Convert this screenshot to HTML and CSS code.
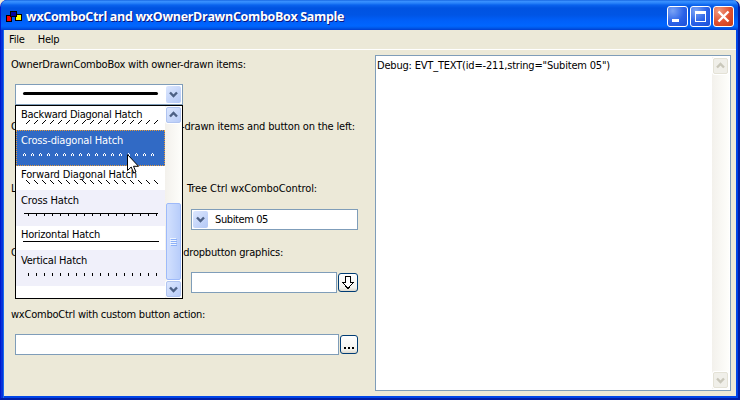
FILE: index.html
```html
<!DOCTYPE html>
<html lang="en"><head><meta charset="utf-8"><title>wxComboCtrl and wxOwnerDrawnComboBox Sample</title>
<link rel="stylesheet" href="styles.css"></head>
<body>
<div class="window">
<header class="titlebar">
<svg class="appicon" width="16" height="12" shape-rendering="crispEdges"><path d="M0 4h6v7H0z" fill="#000"/><path d="M1 5h4v5H1z" fill="#f00"/><path d="M9 3h7v7H9z" fill="#000"/><path d="M10 4h5v5h-5z" fill="#ff0"/><path d="M4 0h7v6H4z" fill="#000"/><path d="M5 1h5v4H5z" fill="#0000a0"/></svg>
<h1 class="title">wxComboCtrl and wxOwnerDrawnComboBox Sample</h1>
<div class="controls">
<span class="ctl"><svg width="19" height="19" shape-rendering="crispEdges"><path d="M4 12h7v3H4z" fill="#fff"/></svg></span>
<span class="ctl"><svg width="19" height="19" shape-rendering="crispEdges"><path d="M4 4h11v11H4zM5 7v7h9V7z" fill="#fff" fill-rule="evenodd"/></svg></span>
<span class="ctl close"><svg width="19" height="19"><path d="M4.500 4.500l10 10M14.500 4.500l-10 10" stroke="#fff" stroke-width="2.400"/></svg></span>
</div>
</header>
<nav class="menu"><span>File</span><span class="help">Help</span></nav>
<main class="client">
<section class="form">
<p class="label l1">OwnerDrawnComboBox with owner-drawn items:</p>
<div class="combo first"><svg class="face" width="140" height="19"><path d="M4.500 8.500h132" stroke="#000" stroke-width="3" stroke-linecap="round"/></svg><span class="drop"><svg width="15" height="17"><path d="M4 6.500l3.500 3.500L11 6.500" class="chev"/></svg></span></div>
<p class="label l2">OwnerDrawnComboBox with owner-drawn items and button on the left:</p>
<div class="heads"><p class="label l3">List View wxComboCtrl:</p><p class="label l4">Tree Ctrl wxComboControl:</p></div>
<div class="combo tree"><span class="drop"><svg width="15" height="17"><path d="M4 6.500l3.500 3.500L11 6.500" class="chev"/></svg></span><span class="value">Subitem 05</span></div>
<p class="label l5">OwnerDrawnComboBox with custom <span class="l5b">dropbutton graphics:</span></p>
<div class="custom graphic"><div class="combo"></div><span class="push"><svg width="18" height="17" shape-rendering="crispEdges"><path d="M6.500 2.500h5v6h3L9 14.500 3.500 8.500h3z" fill="#fff" stroke="#000"/></svg></span></div>
<p class="label l6">wxComboCtrl with custom button action:</p>
<div class="custom action"><div class="combo"></div><span class="push"><svg width="16" height="17" shape-rendering="crispEdges"><path d="M3 11h2v2H3zM7 11h2v2H7zM11 11h2v2h-2z"/></svg></span></div>
</section>
<section class="log"><p class="logtext">Debug: EVT_TEXT(id=-211,string="Subitem 05")</p>
<div class="bar off"><span class="sb"><svg width="13" height="14"><path d="M3 8.500L6.500 5l3.500 3.500" class="chev"/></svg></span><span class="sb"><svg width="13" height="14"><path d="M3 5.500l3.500 3.500L10 5.500" class="chev"/></svg></span></div></section>
</main>
<div class="popup">
<ul class="items">
<li class="short i1">Backward Diagonal Hatch<svg class="hatch" width="149" height="6"><defs><pattern id="bd" x="10" y="0" width="8" height="6" patternUnits="userSpaceOnUse"><path d="M0 4h1v1H0zM1 3h1v1H1zM2 2h1v1H2zM3 1h1v1H3z"/></pattern></defs><path d="M10 0h133v6H10z" fill="url(#bd)"/></svg></li>
<li class="tall sel i2">Cross-diagonal Hatch<svg class="hatch" width="149" height="6"><defs><pattern id="cd" x="7" y="0" width="8" height="6" patternUnits="userSpaceOnUse"><path fill="#fff" d="M1 1h1v1H1zM0 2h1v1H0zM2 2h1v1H2zM0 3h1v1H0zM2 3h1v1H2z"/></pattern></defs><path d="M7 0h132v6H7z" fill="url(#cd)"/></svg></li>
<li class="short i3">Forward Diagonal Hatch<svg class="hatch" width="149" height="6"><defs><pattern id="fd" x="10" y="0" width="8" height="6" patternUnits="userSpaceOnUse"><path d="M0 1h1v1H0zM1 2h1v1H1zM2 3h1v1H2zM3 4h1v1H3z"/></pattern></defs><path d="M10 0h132v6H10z" fill="url(#fd)"/></svg></li>
<li class="tall alt i4">Cross Hatch<svg class="hatch" width="149" height="6"><defs><pattern id="vt" x="12" y="0" width="8" height="6" patternUnits="userSpaceOnUse"><path d="M0 1h1v3H0z"/></pattern></defs><path d="M8 1h134v1H8z"/><path d="M12 0h130v6H12z" fill="url(#vt)"/></svg></li>
<li class="short i5">Horizontal Hatch<svg class="hatch" width="149" height="6" shape-rendering="crispEdges"><path d="M7 1h136v1H7z"/></svg></li>
<li class="tall alt i6">Vertical Hatch<svg class="hatch" width="149" height="6"><path d="M12 0h130v6H12z" fill="url(#vt)"/></svg></li>
</ul>
<div class="bar"><span class="sb"><svg width="13" height="14"><path d="M3 8.500L6.500 5l3.500 3.500" class="chev"/></svg></span><span class="thumb"><svg width="7" height="8" shape-rendering="crispEdges"><path d="M0 0h6v1H0zM0 2h6v1H0zM0 4h6v1H0zM0 6h6v1H0z" fill="#eef4fe"/><path d="M1 1h6v1H1zM1 3h6v1H1zM1 5h6v1H1zM1 7h6v1H1z" fill="#8cb0f8"/></svg></span><span class="sb"><svg width="13" height="14"><path d="M3 5.500l3.500 3.500L10 5.500" class="chev"/></svg></span></div>
</div>
<svg class="cursor" width="13" height="21"><path d="M.5.500v16l3.700-3.500 2.500 6 2.300-1-2.500-5.700h5z" fill="#fff" stroke="#000"/></svg>
</div>
</body></html>
```
FILE: styles.css
```css
*{box-sizing:border-box;margin:0;padding:0}
body{font:11px/14px "DejaVu Sans Condensed","DejaVu Sans",sans-serif;white-space:nowrap;color:#000;background:#ece9d8;overflow:hidden}
svg{display:block}
.window{position:relative;width:740px;height:400px;padding:0 2px 2px 3px;background:#ece9d8;border:solid #001ea6;border-width:0 2px 2px 1px;border-left-color:#0019cf;border-radius:7px 7px 0 0;box-shadow:inset 2px 0 #0831d9,inset 3px 0 #166aee,inset -2px -2px #0045e8;overflow:hidden}
.titlebar{height:30px;margin:0 -2px 0 -3px;padding:0 4px 0 5px;background:linear-gradient(#0a57d8 0,#3c93ff 1px,#2a84fa 3px,#0a63ee 5px,#0053e1 8px,#0055e5 15px,#0060fa 21px,#0066ff 26px,#0058e8 28px,#003dd0 30px);display:flex}
.appicon{margin-top:11px}
.title{margin-left:4px;flex:1;font:bold 12.5px/34px "Open Sans",sans-serif;letter-spacing:-.32px;color:#fff;text-shadow:1px 1px #0a1883}
.controls{display:flex;gap:2px;padding-top:6px}
.ctl{width:21px;height:21px;border:1px solid #fff;border-radius:3px;background:radial-gradient(circle at 25% 20%,#7aa3f5,#2a62e8 55%,#1c4fd8)}
.close{background:radial-gradient(circle at 25% 20%,#f09a80,#e05030 55%,#c83c14)}
.menu{display:flex;gap:13px;height:20px;padding:3px 5px 0;letter-spacing:-.2px;border-bottom:1px solid #fff}
.client{display:flex}
.form{width:371px;padding:8px 0 0 7px}
.label{height:14px}
.l1{letter-spacing:-.2px}
.l2,.l3,.l4,.l5,.l6{padding-top:1px}
.l2{letter-spacing:-.166px;margin-top:14px}
.l3{width:176px;letter-spacing:-.2px}
.l4{letter-spacing:-.09px}
.l5{letter-spacing:-.4px;margin-top:15px}
.l5b{letter-spacing:-.2px}
.l6{letter-spacing:-.23px;margin-top:14px}
.heads{display:flex;margin-top:48px}
.combo{height:21px;border:1px solid #7f9db9;background:#fff;display:flex}
.first{width:168px;margin:12px 0 0 4px;justify-content:space-between}
.face{margin-left:4px}
.drop{width:15px;height:17px;margin:1px;border-radius:2px;background:linear-gradient(135deg,#dce7fe,#b3c8f6)}
.chev{fill:none;stroke:#4d6185;stroke-width:2.400}
.tree{width:167px;margin:14px 0 0 180px}
.value{padding:3px 0 0 6px;letter-spacing:-.4px}
.custom{display:flex;gap:1px;width:167px}
.custom .combo{flex:1}
.push{height:19px;margin-top:1px;border:1px solid #003c74;border-radius:3px;background:linear-gradient(#fff,#f3f3ee 80%,#dcd8cc)}
.graphic{margin:13px 0 0 180px}
.action{width:343px;margin:13px 0 0 4px}
.log{width:356px;height:336px;margin-top:5px;border:1px solid #7f9db9;background:#fff;display:flex;justify-content:space-between}
.logtext{padding:3px 0 0 1px;letter-spacing:-.19px}
.bar{width:17px;display:flex;flex-direction:column;justify-content:space-between;background:linear-gradient(90deg,#f3f1ec,#fefefb)}
.sb{width:15px;height:16px;margin:0 1px;border:1px solid #b0c4f0;border-radius:2px;background:linear-gradient(135deg,#dce7fe,#b8ccf8);box-shadow:0 0 0 1px #fff}
.off{margin:1px}
.off .sb{margin:1px;border-color:#e4e2d6;background:#f0efe9}
.off .chev{stroke:#c9c7ba}
.popup{position:absolute;left:14px;top:105px;width:168px;height:194px;border:1px solid #000;background:#fff;display:flex}
.items{list-style:none;width:149px}
.items li{text-indent:5px}
.short{height:24px;padding-top:2px}
.short .hatch{margin-top:-3px}
.i5 .hatch{margin-top:-2px}
.tall{height:36px;padding-top:4px}
.tall .hatch{margin-top:4px}
.sel{background:#316ac5;color:#fff;outline:1px dotted #e49a3c;outline-offset:-1px}
.alt{background:#f0f0fa}
.i1{letter-spacing:-.28px}
.i2{letter-spacing:-.17px}
.i3{letter-spacing:-.14px}
.i4{letter-spacing:-.12px}
.i5{letter-spacing:-.24px}
.i6{letter-spacing:-.22px}
.popup .bar{padding:1px 0}
.thumb{height:77px;margin:79px 1px 0;border:1px solid #9ebafa;border-radius:2px;background:linear-gradient(90deg,#d2e0fe,#b8cdfa);display:flex;align-items:center;justify-content:center}
.cursor{position:absolute;left:126px;top:154px}
```
